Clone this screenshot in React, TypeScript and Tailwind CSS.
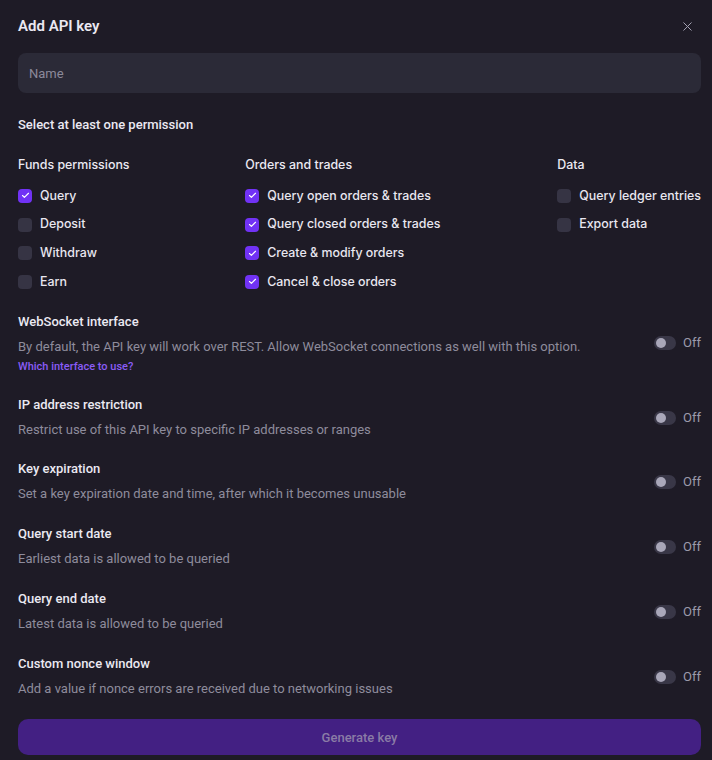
import React, { useState } from 'react';
import { X, Check } from 'lucide-react';

const funds = [
  { label: 'Query', on: true },
  { label: 'Deposit', on: false },
  { label: 'Withdraw', on: false },
  { label: 'Earn', on: false },
];
const orders = [
  { label: 'Query open orders & trades', on: true },
  { label: 'Query closed orders & trades', on: true },
  { label: 'Create & modify orders', on: true },
  { label: 'Cancel & close orders', on: true },
];
const data = [
  { label: 'Query ledger entries', on: false },
  { label: 'Export data', on: false },
];

const options = [
  { title: 'IP address restriction', desc: 'Restrict use of this API key to specific IP addresses or ranges' },
  { title: 'Key expiration', desc: 'Set a key expiration date and time, after which it becomes unusable' },
  { title: 'Query start date', desc: 'Earliest data is allowed to be queried' },
  { title: 'Query end date', desc: 'Latest data is allowed to be queried' },
  { title: 'Custom nonce window', desc: 'Add a value if nonce errors are received due to networking issues' },
];

function Box({ label, on }: { label: string; on: boolean }) {
  return (
    <label className="flex items-center gap-[8px] h-[28.7px] whitespace-nowrap">
      <span
        className={
          'w-[14px] h-[14px] rounded-[4px] flex items-center justify-center shrink-0 ' +
          (on ? 'bg-[#7132f5]' : 'bg-[#363444]')
        }
      >
        {on && <Check size={9} strokeWidth={3} className="text-white" />}
      </span>
      <span className="text-[12.4px] font-medium text-[#e9e7f0]">{label}</span>
    </label>
  );
}

function Toggle() {
  return (
    <div className="flex items-center gap-[7px] shrink-0">
      <span className="w-[22px] h-[14px] rounded-full bg-[#393747] flex items-center px-[2px]">
        <span className="w-[10px] h-[10px] rounded-full bg-[#a9a7b9]" />
      </span>
      <span className="text-[13px] text-[#9c9aab]" style={{ fontFamily: 'Roboto, sans-serif' }}>Off</span>
    </div>
  );
}

export default function App() {
  const [name, setName] = useState('');

  return (
    <div
      className="min-h-screen bg-[#1e1b26] text-[#ebe9f2] pl-[18px] pr-[11px] pt-[15px]"
      style={{ fontFamily: 'Inter, "Noto Sans", sans-serif' }}
    >
      {/* Header */}
      <div className="flex items-center justify-between h-[22px]">
        <h1 className="text-[15px] font-semibold" style={{ fontFamily: 'Roboto, sans-serif' }}>Add API key</h1>
        <X size={15} strokeWidth={1.6} className="text-[#a3a1b2] mr-[6px]" />
      </div>

      <input
        value={name}
        onChange={e => setName(e.target.value)}
        placeholder="Name"
        className="mt-[16px] w-full h-[40px] rounded-[8px] bg-[#2b2a37] px-[11px] text-[13px] placeholder-[#8b899a] outline-none"
        style={{ fontFamily: 'Roboto, sans-serif' }}
      />

      <p className="mt-[22px] text-[13px] font-medium" style={{ fontFamily: 'Roboto, sans-serif' }}>
        Select at least one permission
      </p>

      {/* Permissions */}
      <div className="mt-[21px] flex">
        <div className="w-[228px]">
          <h3 className="text-[12.4px] font-medium h-[17px] mb-[9px]">Funds permissions</h3>
          {funds.map(f => <Box key={f.label} {...f} />)}
        </div>
        <div className="w-[313px]">
          <h3 className="text-[12.4px] font-medium h-[17px] mb-[9px]">Orders and trades</h3>
          {orders.map(f => <Box key={f.label} {...f} />)}
        </div>
        <div className="flex-1">
          <h3 className="text-[12.4px] font-medium h-[17px] mb-[9px]">Data</h3>
          {data.map(f => <Box key={f.label} {...f} />)}
        </div>
      </div>

      {/* Options */}
      <div className="mt-[17px] flex items-start justify-between" style={{ fontFamily: 'Roboto, sans-serif' }}>
        <div>
          <h3 className="text-[13px] font-medium leading-[18px]">WebSocket interface</h3>
          <p className="mt-[7px] text-[13px] text-[#8e8c9c] leading-[18px]">
            By default, the API key will work over REST. Allow WebSocket connections as well with this option.
          </p>
          <a className="block mt-[3px] text-[11px] font-medium text-[#8a5cf6] leading-[16px]">Which interface to use?</a>
        </div>
        <div className="mt-[20px]">
          <Toggle />
        </div>
      </div>

      {options.map((o, i) => (
        <div
          key={o.title}
          className={(i < 2 ? 'mt-[21px]' : 'mt-[22px]') + ' flex items-center justify-between'}
          style={{ fontFamily: 'Roboto, sans-serif' }}
        >
          <div>
            <h3 className="text-[13px] font-medium leading-[18px]">{o.title}</h3>
            <p className="mt-[7px] text-[13px] text-[#8e8c9c] leading-[18px]">{o.desc}</p>
          </div>
          <Toggle />
        </div>
      ))}

      <button
        className="mt-[21px] w-full h-[36px] rounded-[10px] bg-[#432083] text-[13px] font-medium text-[#8a7ba6]"
        style={{ fontFamily: 'Roboto, sans-serif' }}
      >
        Generate key
      </button>
      <div className="h-[10px]" />
    </div>
  );
}
